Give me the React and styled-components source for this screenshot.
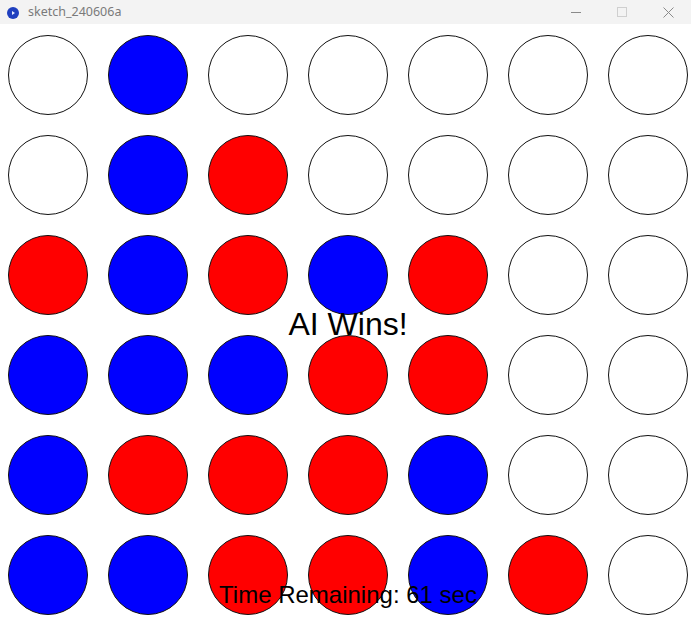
import React from "react";
import styled, { createGlobalStyle } from "styled-components";

const Global = createGlobalStyle`
  html, body { margin: 0; padding: 0; background: #ffffff; }
  body { width: 691px; height: 618px; overflow: hidden; }
`;

const Window = styled.div`
  width: 691px;
  height: 618px;
  display: flex;
  flex-direction: column;
  background: #ffffff;
  overflow: hidden;
`;

const TitleBar = styled.div`
  height: 24px;
  flex: none;
  background: #f3f3f3;
  display: flex;
  align-items: center;
  padding-left: 7px;
  font-family: "Noto Sans", "Open Sans", sans-serif;
  font-size: 12.5px;
  color: #7a7a7a;
`;

const AppIcon = styled.span`
  width: 12px;
  height: 12px;
  border-radius: 50%;
  background: #1f3fbf;
  position: relative;
  margin-right: 9px;
  margin-top: 1px;
  &::after {
    content: "";
    position: absolute;
    left: 5px;
    top: 4px;
    border-left: 3px solid #e8ecff;
    border-top: 2px solid transparent;
    border-bottom: 2px solid transparent;
  }
`;

const Title = styled.span`
  flex: 1;
  margin-top: -1px;
`;

const Controls = styled.div`
  display: flex;
  height: 100%;
`;

const Control = styled.div`
  width: 46px;
  height: 100%;
  display: flex;
  align-items: center;
  justify-content: center;
`;

const Canvas = styled.div`
  position: relative;
  flex: 1;
  padding: 11px 0 0 8px;
`;

const Board = styled.div`
  display: grid;
  grid-template-columns: repeat(7, 80px);
  grid-auto-rows: 80px;
  column-gap: 20px;
  row-gap: 20px;
`;

const colors = { W: "#ffffff", B: "#0000ff", R: "#ff0000" };

const Disc = styled.div`
  width: 80px;
  height: 80px;
  box-sizing: border-box;
  border-radius: 50%;
  border: 1px solid #111;
  background: ${(p) => colors[p.$c]};
`;

const Message = styled.div`
  position: absolute;
  left: 0;
  width: 696px;
  text-align: center;
  font-family: "Liberation Sans", Arial, sans-serif;
  color: #000;
  top: ${(p) => p.$top}px;
  font-size: ${(p) => p.$size}px;
  line-height: 1;
`;

const board = [
  "WBWWWWW",
  "WBRWWWW",
  "RBRBRWW",
  "BBBRRWW",
  "BRRRBWW",
  "BBRRBRW",
];

export default function App() {
  return (
    <>
      <Global />
      <Window>
        <TitleBar>
          <AppIcon />
          <Title>sketch_240606a</Title>
          <Controls>
            <Control>
              <svg width="10" height="10" viewBox="0 0 10 10">
                <line x1="0" y1="5.5" x2="10" y2="5.5" stroke="#8a8a8a" strokeWidth="1" />
              </svg>
            </Control>
            <Control>
              <svg width="10" height="10" viewBox="0 0 10 10">
                <rect x="0.5" y="0.5" width="9" height="9" fill="none" stroke="#cfcfcf" strokeWidth="1" />
              </svg>
            </Control>
            <Control>
              <svg width="11" height="11" viewBox="0 0 11 11">
                <path d="M0.5 0.5 L10.5 10.5 M10.5 0.5 L0.5 10.5" stroke="#8a8a8a" strokeWidth="1" />
              </svg>
            </Control>
          </Controls>
        </TitleBar>
        <Canvas>
          <Board>
            {board.flatMap((row, r) =>
              row.split("").map((c, i) => <Disc key={`${r}-${i}`} $c={c} />)
            )}
          </Board>
          <Message $top={284} $size={32}>AI Wins!</Message>
          <Message $top={559} $size={24}>Time Remaining: 61 sec</Message>
        </Canvas>
      </Window>
    </>
  );
}
